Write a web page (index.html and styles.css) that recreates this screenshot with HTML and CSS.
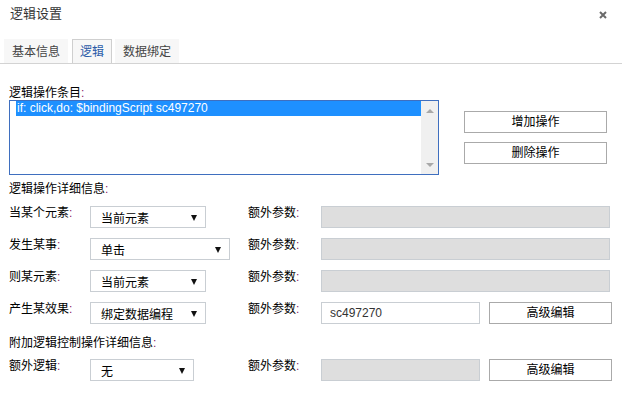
FILE: index.html
```html
<!DOCTYPE html>
<html>
<head>
<meta charset="utf-8">
<link rel="stylesheet" href="styles.css">
</head>
<body>
<div class="dialog">
  <div class="header">
    <span class="title">逻辑设置</span>
    <svg class="close" width="8" height="8" viewBox="0 0 8 8"><path d="M1 1 L7 7 M7 1 L1 7" stroke="#6a6a6a" stroke-width="2"/></svg>
  </div>
  <div class="tabs">
    <div class="tab">基本信息</div>
    <div class="tab active">逻辑</div>
    <div class="tab">数据绑定</div>
  </div>
  <div class="content">
    <div class="section-label">逻辑操作条目<span class="colon">:</span></div>
    <div class="list-row">
      <div class="listbox">
        <div class="options">
          <div class="option selected">if: click,do: $bindingScript sc497270</div>
        </div>
        <div class="scrollbar">
          <span class="arrow-up"></span>
          <span class="arrow-down"></span>
        </div>
      </div>
      <div class="list-buttons">
        <div class="btn wide">增加操作</div>
        <div class="btn wide">删除操作</div>
      </div>
    </div>
    <div class="section-label detail">逻辑操作详细信息<span class="colon">:</span></div>
    <div class="row">
      <div class="label">当某个元素<span class="colon">:</span></div>
      <div class="sel-cell"><div class="select w116"><span>当前元素</span><span class="caret"></span></div></div>
      <div class="label2">额外参数<span class="colon">:</span></div>
      <div class="input disabled long"></div>
    </div>
    <div class="row">
      <div class="label">发生某事<span class="colon">:</span></div>
      <div class="sel-cell"><div class="select w140"><span>单击</span><span class="caret"></span></div></div>
      <div class="label2">额外参数<span class="colon">:</span></div>
      <div class="input disabled long"></div>
    </div>
    <div class="row">
      <div class="label">则某元素<span class="colon">:</span></div>
      <div class="sel-cell"><div class="select w116"><span>当前元素</span><span class="caret"></span></div></div>
      <div class="label2">额外参数<span class="colon">:</span></div>
      <div class="input disabled long"></div>
    </div>
    <div class="row">
      <div class="label">产生某效果<span class="colon">:</span></div>
      <div class="sel-cell"><div class="select w116"><span>绑定数据编程</span><span class="caret"></span></div></div>
      <div class="label2">额外参数<span class="colon">:</span></div>
      <div class="input short">sc497270</div>
      <div class="btn edit">高级编辑</div>
    </div>
    <div class="section-label extra">附加逻辑控制操作详细信息<span class="colon">:</span></div>
    <div class="row">
      <div class="label">额外逻辑<span class="colon">:</span></div>
      <div class="sel-cell"><div class="select w104"><span>无</span><span class="caret"></span></div></div>
      <div class="label2">额外参数<span class="colon">:</span></div>
      <div class="input disabled short"></div>
      <div class="btn edit">高级编辑</div>
    </div>
  </div>
</div>
</body>
</html>
```

FILE: styles.css
```css
* { box-sizing: border-box; }
html, body {
  margin: 0;
  padding: 0;
  background: #fff;
}
body {
  font-family: "Liberation Sans", "Noto Sans CJK SC", sans-serif;
  font-size: 12px;
  color: #000;
}
.dialog {
  width: 622px;
  height: 399px;
  overflow: hidden;
}
.header {
  height: 39px;
  display: flex;
  align-items: flex-start;
  justify-content: space-between;
  padding: 6px 15px 0 10px;
}
.title {
  font-size: 13px;
  line-height: 16px;
  color: #333;
}
.close {
  margin-top: 5px;
}
.tabs {
  display: flex;
  height: 25px;
  padding-left: 4px;
  border-bottom: 1px solid #d3d3d3;
  gap: 4px;
}
.tab {
  height: 24px;
  line-height: 24px;
  width: 64px;
  padding: 0;
  text-align: center;
  white-space: nowrap;
  background: #f7f7f7;
  color: #444;
  font-size: 12px;
  border: 1px solid transparent;
  border-bottom: none;
}
.tab:last-child { margin-left: -1px; }
.tab.active {
  width: 40px;
  border-color: #cfcfcf;
  color: #2a5ba8;
}
.content {
  padding-left: 9px;
}
.colon {
  color: #8a1a6a;
}
.section-label {
  height: 14px;
  line-height: 14px;
  margin-top: 22px;
}
.list-row {
  display: flex;
  align-items: flex-start;
}
.listbox {
  width: 430px;
  height: 75px;
  border: 1px solid #3f6fbf;
  display: flex;
}
.options {
  flex: 1;
  padding-left: 6px;
}
.option {
  height: 15px;
  line-height: 14px;
  font-size: 12px;
  padding-left: 1px;
  font-family: "Liberation Sans", sans-serif;
}
.option.selected {
  background: #1e90ff;
  color: #fff;
}
.scrollbar {
  width: 17px;
  background: #f0f0f0;
  display: flex;
  flex-direction: column;
  justify-content: space-between;
  align-items: center;
  padding: 8px 0 7px;
}
.arrow-up {
  width: 0; height: 0;
  border-left: 4px solid transparent;
  border-right: 4px solid transparent;
  border-bottom: 4px solid #a8a8a8;
}
.arrow-down {
  width: 0; height: 0;
  border-left: 4px solid transparent;
  border-right: 4px solid transparent;
  border-top: 4px solid #a8a8a8;
}
.list-buttons {
  margin-left: 25px;
  margin-top: 11px;
  display: flex;
  flex-direction: column;
  gap: 9px;
}
.btn {
  height: 22px;
  line-height: 20px;
  border: 1px solid #aaa;
  background: #fff;
  text-align: center;
  font-size: 12px;
  color: #000;
}
.btn.wide {
  width: 143px;
}
.section-label.detail {
  margin-top: 6px;
  height: 16px;
  line-height: 16px;
}
.row {
  display: flex;
  align-items: flex-start;
  height: 22px;
  margin-top: 10px;
}
.section-label.detail + .row {
  margin-top: 9px;
}
.label {
  width: 81px;
  line-height: 14px;
}
.label2 {
  width: 73px;
  line-height: 14px;
}
.sel-cell {
  width: 158px;
}
.select {
  height: 22px;
  border: 1px solid #c9ced3;
  background: #fff;
  display: flex;
  align-items: center;
  justify-content: space-between;
  padding: 1px 8px 0 10px;
}
.w116 { width: 116px; }
.w140 { width: 140px; }
.w104 { width: 104px; }
.caret {
  width: 0; height: 0;
  border-left: 3.5px solid transparent;
  border-right: 3.5px solid transparent;
  border-top: 6px solid #111;
}
.input {
  height: 22px;
  border: 1px solid #c9ced3;
  background: #fff;
  line-height: 20px;
  padding-left: 8px;
  color: #333;
  font-family: "Liberation Sans", sans-serif;
}
.input.disabled {
  background: #dedede;
}
.input.long { width: 289px; }
.input.short { width: 159px; }
.btn.edit {
  width: 123px;
  margin-left: 9px;
}
.section-label.extra {
  margin-top: 11px;
  height: 16px;
  line-height: 16px;
}
.section-label.extra + .row {
  margin-top: 8px;
}
```
